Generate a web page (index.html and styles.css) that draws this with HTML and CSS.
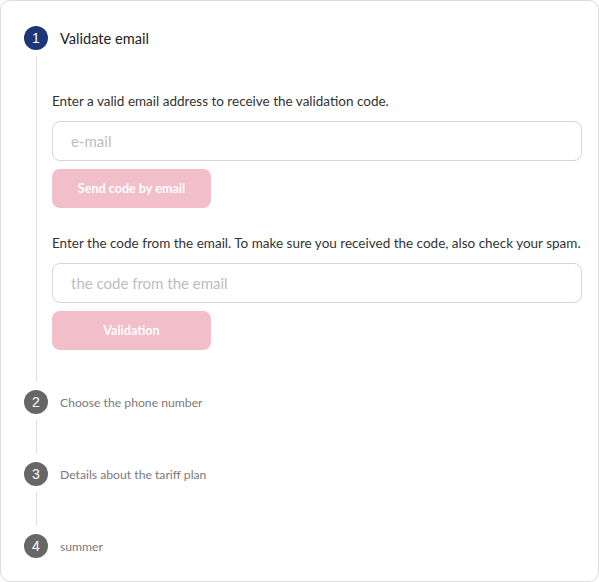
FILE: index.html
```html
<!DOCTYPE html>
<html lang="en">
<head>
    <meta charset="UTF-8">
    <meta name="viewport" content="width=device-width, initial-scale=1.0">
    <title>Validate email</title>
    <link rel="stylesheet" href="styles.css">
</head>
<body>
    <div class="card">
        <div class="step active">
            <div class="step-head">
                <span class="num">1</span>
                <span class="title">Validate email</span>
            </div>
            <div class="step-body">
                <p class="hint">Enter a valid email address to receive the validation code.</p>
                <input type="text" class="field" placeholder="e-mail">
                <button class="btn">Send code by email</button>
                <p class="hint second">Enter the code from the email. To make sure you received the code, also check your spam.</p>
                <input type="text" class="field" placeholder="the code from the email">
                <button class="btn">Validation</button>
            </div>
        </div>
        <div class="step">
            <div class="step-head">
                <span class="num">2</span>
                <span class="title">Choose the phone number</span>
            </div>
            <div class="step-line"></div>
        </div>
        <div class="step">
            <div class="step-head">
                <span class="num">3</span>
                <span class="title">Details about the tariff plan</span>
            </div>
            <div class="step-line"></div>
        </div>
        <div class="step">
            <div class="step-head">
                <span class="num">4</span>
                <span class="title">summer</span>
            </div>
        </div>
    </div>
</body>
</html>
```

FILE: styles.css
```css
*{
    margin: 0;
    padding: 0;
    box-sizing: border-box;
}
body{
    background: #fff;
    font-family: "Lato", "Open Sans", sans-serif;
}
.card{
    width: 599px;
    height: 582px;
    border: 1px solid #dcdcdc;
    border-radius: 10px;
    padding: 25px 16px 0 23px;
}
.step-head{
    display: flex;
    align-items: center;
    gap: 12px;
    height: 24px;
}
.num{
    width: 24px;
    height: 24px;
    border-radius: 50%;
    background: #676767;
    color: #fff;
    font-family: "Liberation Sans", Arial, sans-serif;
    font-size: 14px;
    display: flex;
    align-items: center;
    justify-content: center;
    flex-shrink: 0;
}
.title{
    font-size: 12.2px;
    color: #7a7a7a;
}
.active .num{
    background: #1c3677;
}
.active .title{
    font-size: 14.6px;
    color: #222;
}
.step-body{
    margin: 7px 0 8px 12px;
    border-left: 1px solid #dedede;
    padding: 34px 0 32px 15px;
}
.step-line{
    margin: 6px 0 8px 12px;
    height: 34px;
    border-left: 1px solid #dedede;
}
.hint{
    font-size: 13.5px;
    line-height: 20px;
    color: #333;
    margin-bottom: 10px;
}
.hint.second{
    margin-top: 25px;
}
.field{
    display: block;
    width: 100%;
    height: 40px;
    border: 1px solid #d6d6d6;
    border-radius: 8px;
    padding: 0 18px;
    font-family: inherit;
    font-size: 15px;
    color: #333;
    outline: none;
}
.field::placeholder{
    color: #bdbdbd;
}
.btn{
    display: block;
    width: 159px;
    height: 39px;
    margin-top: 8px;
    border: none;
    border-radius: 8px;
    background: #f2bec9;
    color: #fff;
    font-family: inherit;
    font-size: 12.6px;
    font-weight: bold;
}
```
